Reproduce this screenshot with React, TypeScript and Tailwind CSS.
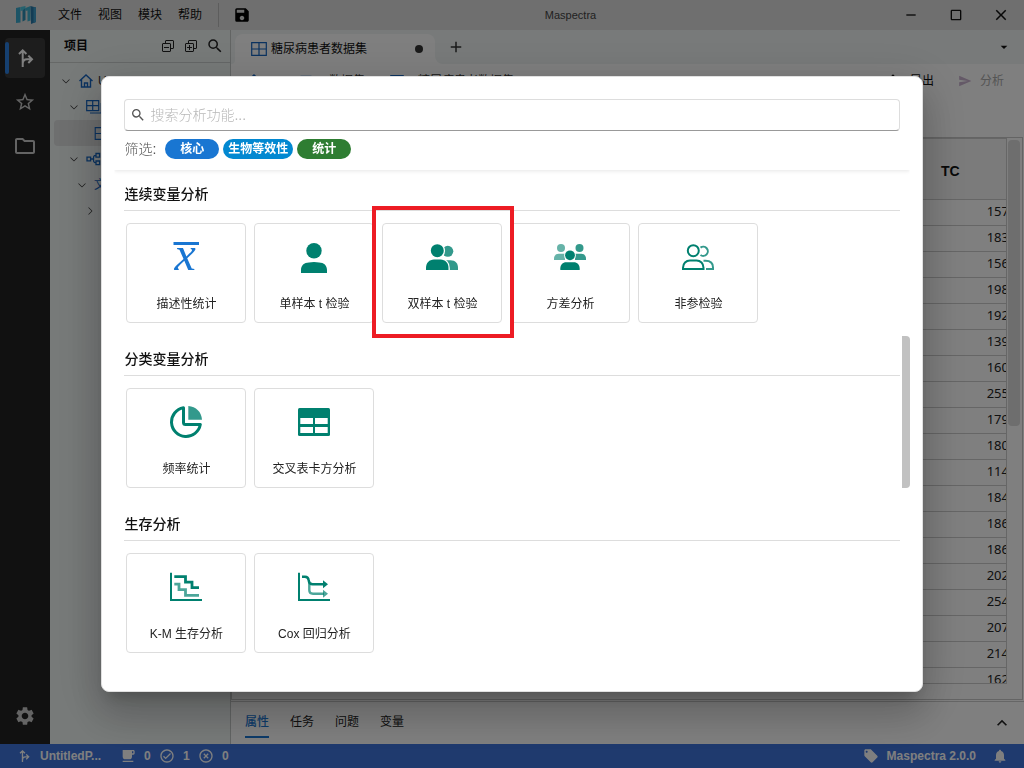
import React from "react";
import {
  MdAdd,
  MdArrowDropDown,
  MdClose,
  MdCropSquare,
  MdExpandLess,
  MdFreeBreakfast,
  MdHighlightOff,
  MdLocalOffer,
  MdNotifications,
  MdOutlineCheckCircle,
  MdOutlineFolder,
  MdRemove,
  MdSave,
  MdSearch,
  MdSend,
  MdSettings,
  MdStarBorder,
  MdUpload,
} from "react-icons/md";
import { VscChevronDown, VscChevronRight, VscCollapseAll, VscExpandAll } from "react-icons/vsc";

type IconProps = { className?: string };

function LogoIcon() {
  return (
    <svg viewBox="0 0 20 18" className="h-[18px] w-5" aria-hidden="true">
      <path d="M0 2 4.500 1v15.500L0 17z" fill="#3aa9cc" />
      <path d="M4.500 1 9.500 0v4L4.500 5z" fill="#4cc4dc" />
      <path d="M6.500 4.500 9.500 2v12l-3 1.500z" fill="#2b8fb4" />
      <path d="M9.500 2 14.500 0v14.500l-3 1V4.500L9.500 5z" fill="#3fb2d0" />
      <path d="M14.500 0 20 1.500V16l-5 2z" fill="#2878a8" />
      <path d="M17.500 1 20 1.500V16l-2.500 1z" fill="#3f9cc8" />
    </svg>
  );
}

function BranchIcon({ className }: IconProps) {
  return (
    <svg viewBox="0 0 24 24" className={className} fill="none" stroke="currentColor" strokeWidth="2" aria-hidden="true">
      <path d="M9.700 21V4.500M6 8l3.700-3.700L13.400 8M9.700 18c0-3 1.500-4.700 4.300-4.700h4.500M15.300 9.600l3.700 3.700-3.700 3.700" />
    </svg>
  );
}

function GridIcon({ className }: IconProps) {
  return (
    <svg viewBox="0 0 16 14" className={className} fill="none" stroke="currentColor" strokeWidth="1.2" aria-hidden="true">
      <path d="M.7.7h14.600v12.600H.7zM8 .7v12.600M.7 7h14.600" />
    </svg>
  );
}

function GridStackIcon({ className }: IconProps) {
  return (
    <svg viewBox="0 0 16 14" className={className} fill="none" stroke="currentColor" strokeWidth="1.2" aria-hidden="true">
      <path d="M.7.7h12v10H.7zM6.700.7v10M.7 5.700h12M4 13h11.300V3" />
    </svg>
  );
}

function HomeIcon({ className }: IconProps) {
  return (
    <svg viewBox="0 0 16 16" className={className} fill="none" stroke="currentColor" strokeWidth="1.400" aria-hidden="true">
      <path d="M1.500 8 8 2l6.500 6M3.500 6.500V14h9V6.500M6.500 14v-4h3v4" />
    </svg>
  );
}

function NodesIcon({ className }: IconProps) {
  return (
    <svg viewBox="0 0 16 14" className={className} fill="none" stroke="currentColor" strokeWidth="1.3" aria-hidden="true">
      <path d="M1 5.200h3.600v3.600H1zM10 1.500h3.600v3.600H10zM10 9h3.600v3.600H10zM4.600 7h3M10 3.300C7.500 3.300 7.500 4.500 7.500 7s0 3.800 2.500 3.800" />
    </svg>
  );
}

const iconClass = "h-8 w-8";

function MeanIcon() {
  return (
    <svg viewBox="0 -1 32 32" className={iconClass} aria-hidden="true">
      <rect x="3.500" y="0" width="25.500" height="3" fill="#1976d2" />
      <text x="4.500" y="28" fontSize="48" fontStyle="italic" fontFamily="Liberation Serif, serif" fill="#1976d2">
        x
      </text>
    </svg>
  );
}

function OnePersonIcon() {
  return (
    <svg viewBox="0 -1 32 32" className={iconClass} fill="#00806f" aria-hidden="true">
      <circle cx="16" cy="8.700" r="7.700" />
      <path d="M3 31v-3c0-4.500 3-7.500 8-7.500C12.500 20.200 14 20 16 20s3.500.2 5 .5c5 0 8 3 8 7.500v3z" />
    </svg>
  );
}

function TwoPeopleIcon() {
  return (
    <svg viewBox="0 -1 32 32" className={iconClass} fill="#00806f" aria-hidden="true">
      <g opacity=".8">
        <circle cx="21.800" cy="9.300" r="5.500" />
        <path d="M20 18.300h4.500c5 0 7.500 3.200 7.500 7.500V28H22z" />
      </g>
      <g stroke="#fff" strokeWidth="2.600" paintOrder="stroke">
        <circle cx="11.300" cy="8.700" r="6.500" />
        <path d="M0 28v-2c0-5 3.200-8.500 8-8.500h6.500c4.800 0 8 3.500 8 8.500v2z" />
      </g>
    </svg>
  );
}

function ThreePeopleIcon() {
  return (
    <svg viewBox="0 -1 32 32" className={iconClass} fill="#00806f" aria-hidden="true">
      <g opacity=".6">
        <circle cx="7" cy="6" r="4" />
        <path d="M0 18v-1.500c0-3 2-4.800 4.700-4.800H11V18z" />
      </g>
      <g opacity=".8">
        <circle cx="25.500" cy="6" r="4" />
        <path d="M32 18v-1.500c0-3-2-4.800-4.700-4.800H21V18z" />
      </g>
      <g stroke="#fff" strokeWidth="2" paintOrder="stroke">
        <circle cx="16" cy="13.300" r="4.900" />
        <path d="M6.300 28v-1.500c0-3.800 2.400-6.300 6-6.300h7.400c3.600 0 6 2.500 6 6.300V28z" />
      </g>
    </svg>
  );
}

function TwoPeopleOutlineIcon() {
  return (
    <svg viewBox="0 -1 32 32" className={iconClass} fill="none" stroke="#00806f" strokeWidth="2" aria-hidden="true">
      <g opacity=".8">
        <path d="M18.500 5.600a4.600 4.600 0 1 1 0 7.400M21.500 18.800h2c5 0 7.500 2.700 7.500 6.700V27h-7" />
      </g>
      <circle cx="11.300" cy="8.700" r="5.500" />
      <path d="M1 27v-1.200c0-4.300 3-7.300 7-7.300h6.500c4 0 7 3 7 7.300V27z" />
    </svg>
  );
}

function PieIcon() {
  return (
    <svg viewBox="0 0 32 32" className={iconClass} aria-hidden="true">
      <path
        d="M13.500 1.700A14.500 14.500 0 1 0 30.300 18.500H15.500a2 2 0 0 1-2-2z"
        fill="none"
        stroke="#00806f"
        strokeWidth="3"
        strokeLinejoin="round"
      />
      <path d="M18.300 0C26 .5 31.500 6 32 13.700H18.300z" fill="#00806f" opacity=".8" />
    </svg>
  );
}

function TableIcon() {
  return (
    <svg viewBox="0 0 32 32" className={iconClass} aria-hidden="true">
      <rect y="2" width="32" height="28" rx="1.500" fill="#00806f" />
      <path d="M2.300 12H15v6H2.300zM17 12h12.700v6H17zM2.300 21H15v6H2.300zM17 21h12.700v6H17z" fill="#fff" />
    </svg>
  );
}

function SurvivalIcon() {
  return (
    <svg viewBox="0 -1 32 32" className={iconClass} fill="none" stroke="#00806f" aria-hidden="true">
      <path d="M1 .7V28h31" strokeWidth="2" />
      <path d="M4.300 12.200H9v5.500h6.500v5.600H29" strokeWidth="2.800" opacity=".7" />
      <path d="M4.300 4.700h11.200v5.500H22v5.500h7" strokeWidth="2.800" />
    </svg>
  );
}

function CoxIcon() {
  return (
    <svg viewBox="0 -1 32 32" className={iconClass} fill="none" stroke="#00806f" aria-hidden="true">
      <path d="M1 .7V28h31" strokeWidth="2" />
      <path d="M11.300 11v7c0 2.500 1.200 3.700 3.700 3.700h11" strokeWidth="2.400" opacity=".7" />
      <path d="M25 17.700l5 4-5 4z" fill="#00806f" stroke="none" opacity=".7" />
      <path d="M4 4.700h3c2.500 0 3.500 1.300 3.700 3.800.3 2.500 1.300 3.700 3.800 3.700H26" strokeWidth="2.400" />
      <path d="M25 8.200l5 4-5 4z" fill="#00806f" stroke="none" />
    </svg>
  );
}

const sections = [
  {
    title: "连续变量分析",
    items: [
      { label: "描述性统计", Icon: MeanIcon, marked: false },
      { label: "单样本 t 检验", Icon: OnePersonIcon, marked: false },
      { label: "双样本 t 检验", Icon: TwoPeopleIcon, marked: true },
      { label: "方差分析", Icon: ThreePeopleIcon, marked: false },
      { label: "非参检验", Icon: TwoPeopleOutlineIcon, marked: false },
    ],
  },
  {
    title: "分类变量分析",
    items: [
      { label: "频率统计", Icon: PieIcon, marked: false },
      { label: "交叉表卡方分析", Icon: TableIcon, marked: false },
    ],
  },
  {
    title: "生存分析",
    items: [
      { label: "K-M 生存分析", Icon: SurvivalIcon, marked: false },
      { label: "Cox 回归分析", Icon: CoxIcon, marked: false },
    ],
  },
];

const totals = [157, 183, 156, 198, 192, 139, 160, 255, 179, 180, 114, 184, 186, 186, 202, 254, 207, 214, 162];

function TitleBar() {
  return (
    <header className="flex h-[30px] shrink-0 items-center bg-[#dedede] text-[12px]">
      <div className="flex w-[253px] shrink-0 items-center pl-4">
        <LogoIcon />
        <nav className="ml-[22px] flex gap-4">
          {["文件", "视图", "模块", "帮助"].map((m) => (
            <button key={m} type="button">
              {m}
            </button>
          ))}
        </nav>
        <div className="mr-3.5 ml-4 h-6 w-px bg-[#bbb]" />
        <button type="button" aria-label="保存">
          <MdSave className="h-[18px] w-[18px] text-black" />
        </button>
      </div>
      <h1 className="flex-1 text-center text-[11px] text-[#444]">Maspectra</h1>
      <div className="flex shrink-0 items-center pr-px">
        <button type="button" aria-label="最小化" className="flex w-[45px] justify-center">
          <MdRemove className="h-4 w-4" />
        </button>
        <button type="button" aria-label="最大化" className="flex w-[45px] justify-center">
          <MdCropSquare className="h-4 w-4" />
        </button>
        <button type="button" aria-label="关闭" className="flex w-[45px] justify-center">
          <MdClose className="h-[18px] w-[18px]" />
        </button>
      </div>
    </header>
  );
}

function ActivityBar() {
  return (
    <aside className="flex w-[50px] shrink-0 flex-col items-center gap-1 bg-[#222] py-2 text-[#c8c8c8]">
      <button type="button" aria-label="项目" className="flex h-10 w-10 items-center rounded bg-[#3a3a3a] text-white">
        <span className="h-8 w-1 rounded-sm bg-[#2c80e0]" />
        <BranchIcon className="ml-1 h-6 w-6" />
      </button>
      <button type="button" aria-label="收藏" className="flex h-10 w-10 items-center justify-center">
        <MdStarBorder className="h-[22px] w-[22px]" />
      </button>
      <button type="button" aria-label="文件夹" className="flex h-10 w-10 items-center justify-center">
        <MdOutlineFolder className="h-6 w-6" />
      </button>
      <button type="button" aria-label="设置" className="mt-auto flex h-10 w-10 items-center justify-center">
        <MdSettings className="h-[22px] w-[22px]" />
      </button>
    </aside>
  );
}

function ProjectPanel() {
  return (
    <section className="w-[181px] shrink-0 overflow-hidden border-r border-[#c4c8c7] bg-[#eff4f3]">
      <div className="flex h-[33px] items-center border-b border-[#ccd0cf] pr-1.5 pl-[14px]">
        <h2 className="flex-1 text-[12px] font-bold">项目</h2>
        <div className="flex items-center gap-[7px] text-[#222]">
          <button type="button" aria-label="全部折叠">
            <VscCollapseAll className="h-4 w-4" />
          </button>
          <button type="button" aria-label="全部展开">
            <VscExpandAll className="h-4 w-4" />
          </button>
          <button type="button" aria-label="搜索">
            <MdSearch className="h-[18px] w-[18px]" />
          </button>
        </div>
      </div>
      <ul className="px-1 pt-[5px] text-[12px] whitespace-nowrap text-[#333]">
        <li className="flex h-[26px] items-center gap-1.5 pl-1.5">
          <VscChevronDown className="h-4 w-3" />
          <HomeIcon className="h-4 w-4 shrink-0 text-[#1565c0]" />
          <span className="-ml-0.5">UntitledProject</span>
        </li>
        <li className="flex h-[26px] items-center gap-1.5 pl-[14px]">
          <VscChevronDown className="h-4 w-3" />
          <GridStackIcon className="h-[14px] w-4 shrink-0 text-[#1565c0]" />
          数据集
        </li>
        <li className="flex h-[26px] items-center gap-1.5 rounded bg-[#dcdede] pl-10">
          <GridIcon className="h-[13px] w-4 shrink-0 text-[#1565c0]" />
          糖尿病患者数据集
        </li>
        <li className="flex h-[26px] items-center gap-1.5 pl-[14px]">
          <VscChevronDown className="h-4 w-3" />
          <NodesIcon className="h-[14px] w-4 shrink-0 text-[#1565c0]" />
          分析
        </li>
        <li className="flex h-[26px] items-center gap-1.5 pl-[22px]">
          <VscChevronDown className="h-4 w-3" />
          <span className="text-[#1565c0]">文</span>
        </li>
        <li className="flex h-[26px] items-center pl-[30px]">
          <VscChevronRight className="h-4 w-3" />
        </li>
      </ul>
    </section>
  );
}

function TabStrip() {
  return (
    <div className="flex h-[34px] shrink-0 bg-white">
      <div className="w-1 rounded-br bg-[#f0f5f4]" />
      <div className="w-[200px] bg-[#f0f5f4] pt-1">
        <div className="flex h-full items-center rounded-t-lg bg-white pr-3 pl-4 text-[12px]">
          <GridIcon className="h-[14px] w-4 text-[#1565c0]" />
          <span className="ml-1 flex-1">糖尿病患者数据集</span>
          <span className="h-2 w-2 rounded-full bg-[#333]" />
        </div>
      </div>
      <div className="flex flex-1 items-center justify-between rounded-bl-lg bg-[#f0f5f4] pr-3 pl-3">
        <button type="button" aria-label="新建标签" className="text-[#333]">
          <MdAdd className="h-[18px] w-[18px]" />
        </button>
        <button type="button" aria-label="标签列表">
          <MdArrowDropDown className="h-5 w-4" />
        </button>
      </div>
    </div>
  );
}

function Workspace() {
  return (
    <main className="flex min-w-0 flex-1 flex-col bg-white">
      <TabStrip />
      <div className="flex h-[73px] shrink-0 items-start text-[12px]">
        <div className="flex h-[34px] flex-1 items-center pl-[15px] text-[#333]">
          <HomeIcon className="h-4 w-4 text-[#1565c0]" />
          <GridIcon className="ml-[38px] h-3 w-3 text-[#1565c0]" />
          <span className="ml-[17px]">数据集</span>
          <GridIcon className="ml-[25px] h-3 w-[14px] text-[#1565c0]" />
          <span className="ml-[14px]">糖尿病患者数据集</span>
        </div>
        <div className="flex h-[34px] items-center pr-5">
          <button type="button" className="flex items-center gap-2">
            <MdUpload className="h-[18px] w-[18px]" />
            导出
          </button>
          <button type="button" className="ml-6 flex items-center gap-2 text-[#aaa]" disabled>
            <MdSend className="h-[14px] w-[14px] text-[#c9b2cf]" />
            分析
          </button>
        </div>
      </div>
      <div className="mr-px flex min-h-0 flex-1 border border-[#c8c8c8] pb-[15px]">
        <div className="min-w-0 flex-1 overflow-hidden border-t border-r border-b border-[#ccc]">
          <table className="w-[calc(100%+3px)] border-separate border-spacing-0">
            <thead>
              <tr className="h-[61px] bg-[#f6f6f6]">
                <th className="border-b border-[#ccc]" />
                <th className="w-[100px] border-b border-[#ccc] pt-1 pl-8 text-left text-[14px] font-bold">TC</th>
              </tr>
            </thead>
            <tbody className="font-['Noto_Sans',sans-serif] text-[13px] leading-[23px] text-[#222]">
              {totals.map((v, i) => (
                <tr key={i} className="h-[26px]">
                  <td className="border-b border-[#ccc]" />
                  <td className="border-b border-[#ccc] text-right align-top">{v}</td>
                </tr>
              ))}
            </tbody>
          </table>
        </div>
        <div className="w-[15px] pt-0.5 pl-px">
          <div className="h-[286px] w-3 rounded-sm bg-[#dcdcdc]" />
        </div>
      </div>
      <div className="mt-px flex h-[43px] shrink-0 items-center border-t border-[#ccc] pr-3 pl-[14px] text-[12px] text-[#222]">
        <div className="flex h-full flex-1 gap-[21px]">
          {["属性", "任务", "问题", "变量"].map((t, i) => (
            <button
              key={t}
              type="button"
              className={
                i === 0
                  ? "mb-1.5 border-b-2 border-[#1976d2] pt-1.5 font-medium text-[#1976d2]"
                  : "mb-1.5 border-b-2 border-transparent pt-1.5"
              }
            >
              {t}
            </button>
          ))}
        </div>
        <button type="button" aria-label="展开">
          <MdExpandLess className="h-5 w-5" />
        </button>
      </div>
    </main>
  );
}

function StatusBar() {
  return (
    <footer className="flex h-6 shrink-0 items-center justify-between bg-[#3e74dc] pr-4 pl-4 text-[12px] font-bold text-white">
      <div className="flex items-center">
        <BranchIcon className="h-4 w-4" />
        <span className="ml-2 w-[80px]">UntitledP...</span>
        <MdFreeBreakfast className="h-4 w-4" />
        <span className="ml-2 w-[15px]">0</span>
        <MdOutlineCheckCircle className="h-4 w-4" />
        <span className="ml-2 w-[15px]">1</span>
        <MdHighlightOff className="h-4 w-4" />
        <span className="ml-2">0</span>
      </div>
      <div className="flex items-center">
        <MdLocalOffer className="h-4 w-4" />
        <span className="ml-2">Maspectra 2.0.0</span>
        <MdNotifications className="ml-4 h-4 w-4" />
      </div>
    </footer>
  );
}

function AnalysisDialog() {
  return (
    <div className="fixed inset-0 flex items-center justify-center bg-black/50">
      <div
        role="dialog"
        aria-modal="true"
        aria-label="分析"
        className="flex h-[calc(80%+2px)] w-[calc(80%+2px)] flex-col overflow-hidden rounded-lg border border-[#e0e0e0] bg-white px-3 shadow-[0_11px_15px_-7px_rgba(0,0,0,0.2),0_24px_38px_3px_rgba(0,0,0,0.14),0_9px_46px_8px_rgba(0,0,0,0.12)]"
      >
        <div className="shrink-0 px-[10px] pt-[22px] pb-[11px] shadow-[0_1px_4px_rgba(0,0,0,0.1)] [clip-path:inset(0_0_-8px_0)]">
          <label className="flex h-8 items-center rounded border border-[#ddd] border-b-[#999] px-[5px]">
            <MdSearch className="h-4 w-4 text-[#555]" />
            <input
              type="text"
              aria-label="搜索分析功能"
              placeholder="搜索分析功能..."
              className="ml-1 h-full flex-1 bg-transparent text-[14px] font-light outline-none placeholder:text-[#b8b8b8]"
            />
          </label>
          <div className="mt-2 flex items-center gap-1 text-[12px] font-bold text-white">
            <span className="mr-[5px] text-[14px] leading-5 font-light text-[#555]">筛选:</span>
            <button type="button" className="h-5 min-w-[54px] rounded-full bg-[#1976d2] px-[5px] leading-[18px]">
              核心
            </button>
            <button type="button" className="h-5 min-w-[54px] rounded-full bg-[#0288d1] px-[5px] leading-[18px]">
              生物等效性
            </button>
            <button type="button" className="h-5 min-w-[54px] rounded-full bg-[#2e7d32] px-[5px] leading-[18px]">
              统计
            </button>
          </div>
        </div>
        <div className="flex min-h-0 flex-1">
          <div className="mr-0.5 flex-1 pl-[10px]">
            {sections.map((s) => (
              <section key={s.title}>
                <h3 className="border-b border-[#ddd] pt-[14px] pb-1.5 text-[14px] leading-5 font-medium text-[#111]">
                  {s.title}
                </h3>
                <div className="flex gap-2 px-0.5 py-3">
                  {s.items.map(({ label, Icon, marked }) => (
                    <div key={label} className="relative">
                      <button
                        type="button"
                        className="flex h-[100px] w-[120px] flex-col items-center rounded border border-[#ddd] bg-white pt-[17px]"
                      >
                        <Icon />
                        <span className="mt-[22px] text-[12px] leading-[18px] text-[#222]">{label}</span>
                      </button>
                      {marked && (
                        <div className="pointer-events-none absolute -top-[17px] -right-3 -bottom-[15px] -left-[10px] z-10 border-4 border-[#ed1c24]" />
                      )}
                    </div>
                  ))}
                </div>
              </section>
            ))}
          </div>
          <div className="w-2">
            <div className="mt-[166px] h-[152px] rounded-r-sm bg-[#c1c1c1]" />
          </div>
        </div>
      </div>
    </div>
  );
}

export default function App() {
  return (
    <div className="flex h-screen flex-col overflow-hidden font-['Liberation_Sans','Noto_Sans_CJK_SC',sans-serif] text-[#111]">
      <TitleBar />
      <div className="flex min-h-0 flex-1">
        <ActivityBar />
        <ProjectPanel />
        <Workspace />
      </div>
      <StatusBar />
      <AnalysisDialog />
    </div>
  );
}
